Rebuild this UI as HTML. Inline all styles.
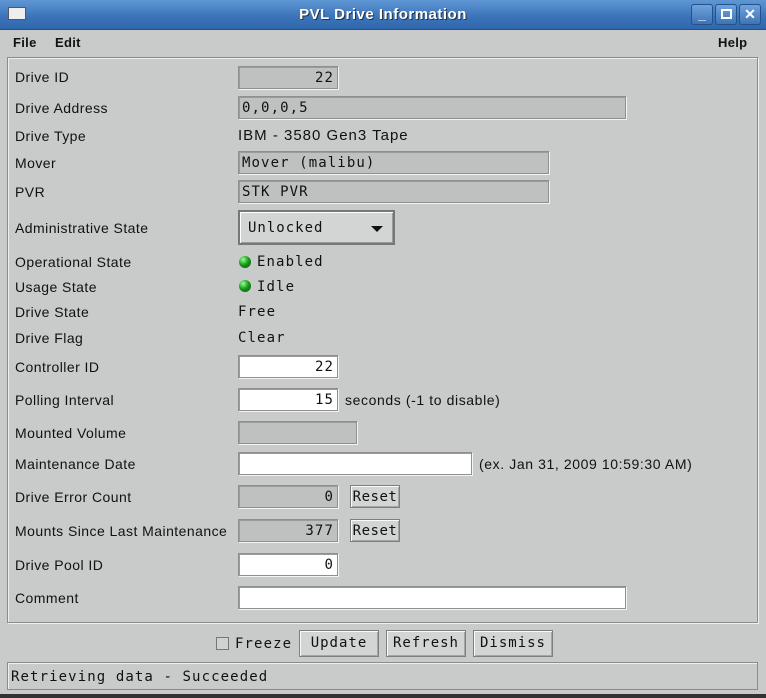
<!DOCTYPE html>
<html><head><meta charset="utf-8"><style>
*{margin:0;padding:0;box-sizing:border-box}
body{width:766px;height:698px;background:#c9cbcb;font-family:"Liberation Sans",sans-serif;font-size:14px;letter-spacing:0.6px;color:#111;position:relative;overflow:hidden}
.a{position:absolute}
.title{left:0;top:0;width:766px;height:30px;background:linear-gradient(#5f97d4,#3a72b8 60%,#3168ad);border-bottom:1px solid #2b4f80;letter-spacing:0.5px}
.title .t{left:0;width:766px;top:6px;text-align:center;color:#fff;font-weight:bold;font-size:15px;text-shadow:1px 1px 0 #234}
.wb{top:4px;width:22px;height:21px;border:1px solid #24518a;border-radius:3px;background:linear-gradient(#6fa3dc,#3d74b8);color:#fff;font-weight:bold;text-align:center;font-size:14px;line-height:19px;letter-spacing:0}
.menu{font-weight:bold;font-size:13px;top:35px;letter-spacing:0.3px}
.panel{left:7px;top:57px;width:751px;height:566px;border:1px solid #8a8c8c;box-shadow:inset 1px 1px 0 #eee,1px 1px 0 #f0f0f0}
.l{left:15px;letter-spacing:0.45px}
.f{border:1px solid #8e9090;box-shadow:inset 1px 1px 0 #9a9c9c,1px 1px 0 #f4f4f4;background:#bfc1c1;font-family:"DejaVu Sans Mono",monospace;font-size:14px;letter-spacing:1.1px;padding:0 3px;line-height:22px;height:23px}
.w{background:#fff}
.r{text-align:right}
.m{font-family:"DejaVu Sans Mono",monospace;font-size:14px;letter-spacing:1.1px}
.btn{border:1px solid #7d7f7f;box-shadow:inset 1px 1px 0 #fafafa,inset -1px -1px 0 #a5a7a7;background:#d3d5d5;font-family:"DejaVu Sans Mono",monospace;font-size:14px;letter-spacing:1px;text-align:center;line-height:25px}
.led{width:12px;height:12px;border-radius:50%;background:radial-gradient(circle at 35% 30%,#9f9,#1a9d1a 45%,#064a06);}
</style></head><body>
<div class="a title"><div class="a" style="left:8px;top:7px;width:18px;height:13px;background:#eee;border:1px solid #556"></div><div class="a t">PVL Drive Information</div>
<div class="a wb" style="left:691px">_</div><div class="a wb" style="left:715px"><div style="width:11px;height:10px;border:2px solid #fff;margin:4px auto"></div></div><div class="a wb" style="left:739px">✕</div></div>
<div class="a menu" style="left:13px">File</div><div class="a menu" style="left:55px">Edit</div><div class="a menu" style="left:718px">Help</div>
<div class="a panel"></div>

<div class="a l" style="top:69px">Drive ID</div><div class="a f r" style="left:238px;top:66px;width:100px">22</div>
<div class="a l" style="top:100px">Drive Address</div><div class="a f" style="left:238px;top:96px;width:388px">0,0,0,5</div>
<div class="a l" style="top:128px">Drive Type</div><div class="a" style="left:238px;top:127px;font-size:15px;letter-spacing:1px">IBM - 3580 Gen3 Tape</div>
<div class="a l" style="top:155px">Mover</div><div class="a f" style="left:238px;top:151px;width:311px">Mover (malibu)</div>
<div class="a l" style="top:184px">PVR</div><div class="a f" style="left:238px;top:180px;width:311px">STK PVR</div>
<div class="a l" style="top:220px">Administrative State</div>
<div class="a btn" style="left:238px;top:210px;width:157px;height:35px;border:2px solid #777;box-shadow:inset 1px 1px 0 #fff,inset -1px -1px 0 #999;text-align:left;padding-left:8px;line-height:33px">Unlocked<span class="a" style="right:10px;top:14px;width:0;height:0;border-left:6px solid transparent;border-right:6px solid transparent;border-top:6px solid #111"></span></div>
<div class="a l" style="top:254px">Operational State</div><div class="a led" style="left:239px;top:256px"></div><div class="a m" style="left:257px;top:254px">Enabled</div>
<div class="a l" style="top:279px">Usage State</div><div class="a led" style="left:239px;top:280px"></div><div class="a m" style="left:257px;top:279px">Idle</div>
<div class="a l" style="top:304px">Drive State</div><div class="a m" style="left:238px;top:304px">Free</div>
<div class="a l" style="top:330px">Drive Flag</div><div class="a m" style="left:238px;top:330px">Clear</div>
<div class="a l" style="top:359px">Controller ID</div><div class="a f w r" style="left:238px;top:355px;width:100px">22</div>
<div class="a l" style="top:392px">Polling Interval</div><div class="a f w r" style="left:238px;top:388px;width:100px">15</div><div class="a" style="left:345px;top:392px">seconds (-1 to disable)</div>
<div class="a l" style="top:425px">Mounted Volume</div><div class="a f" style="left:238px;top:421px;width:119px"></div>
<div class="a l" style="top:456px">Maintenance Date</div><div class="a f w" style="left:238px;top:452px;width:234px"></div><div class="a" style="left:479px;top:456px">(ex. Jan 31, 2009 10:59:30 AM)</div>
<div class="a l" style="top:489px">Drive Error Count</div><div class="a f r" style="left:238px;top:485px;width:100px">0</div><div class="a btn" style="left:350px;top:485px;width:50px;height:23px;line-height:22px;letter-spacing:0.5px">Reset</div>
<div class="a l" style="top:523px">Mounts Since Last Maintenance</div><div class="a f r" style="left:238px;top:519px;width:100px">377</div><div class="a btn" style="left:350px;top:519px;width:50px;height:23px;line-height:22px;letter-spacing:0.5px">Reset</div>
<div class="a l" style="top:557px">Drive Pool ID</div><div class="a f w r" style="left:238px;top:553px;width:100px">0</div>
<div class="a l" style="top:590px">Comment</div><div class="a f w" style="left:238px;top:586px;width:388px"></div>

<div class="a" style="left:216px;top:637px;width:13px;height:13px;border:1px solid #777;background:#d0d2d2"></div><div class="a m" style="left:235px;top:636px">Freeze</div>
<div class="a btn" style="left:299px;top:630px;width:80px;height:27px">Update</div>
<div class="a btn" style="left:386px;top:630px;width:80px;height:27px">Refresh</div>
<div class="a btn" style="left:473px;top:630px;width:80px;height:27px">Dismiss</div>
<div class="a" style="left:7px;top:662px;width:751px;height:28px;border:1px solid #8a8c8c;box-shadow:inset 1px 1px 0 #eee"></div>
<div class="a m" style="left:11px;top:669px">Retrieving data - Succeeded</div>
<div class="a" style="left:0;top:694px;width:766px;height:4px;background:#333"></div>
</body></html>
